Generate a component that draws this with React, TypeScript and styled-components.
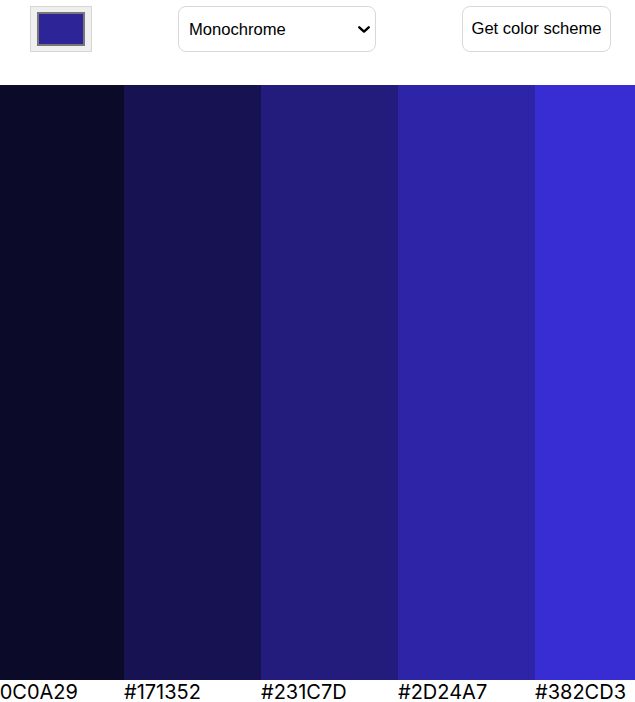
import React, { useState } from "react";
import styled, { createGlobalStyle } from "styled-components";

const GlobalStyle = createGlobalStyle`
  html, body {
    margin: 0;
    padding: 0;
    overflow: hidden;
    background: #fff;
  }
  body {
    font-family: "Liberation Sans", Arial, sans-serif;
  }
`;

const Header = styled.header`
  display: flex;
  align-items: flex-start;
  gap: 86px;
  height: 85px;
  padding: 6px 0 0 30px;
  box-sizing: border-box;
`;

const ColorInput = styled.input`
  width: 62px;
  height: 46px;
  margin: 0;
  padding: 5px 6px;
  box-sizing: border-box;
  background: #efefef;
  border: 1px solid #d6d6d6;
  cursor: pointer;

  &::-webkit-color-swatch-wrapper {
    padding: 0;
  }
  &::-webkit-color-swatch {
    border: 2px solid #777;
  }
`;

const SelectWrap = styled.div`
  position: relative;
  width: 198px;
  height: 46px;
`;

const Select = styled.select`
  appearance: none;
  width: 100%;
  height: 100%;
  padding: 0 28px 0 10px;
  font-family: "Liberation Sans", Arial, sans-serif;
  font-size: 16.6px;
  color: #000;
  background: #fff;
  border: 1px solid #d8d8dc;
  border-radius: 8px;
`;

const Chevron = styled.svg`
  position: absolute;
  right: 6px;
  top: 20px;
  width: 12px;
  height: 7px;
  pointer-events: none;
`;

const Button = styled.button`
  width: 149px;
  height: 46px;
  padding: 0;
  font-family: "Liberation Sans", Arial, sans-serif;
  font-size: 16.6px;
  color: #000;
  background: #fff;
  border: 1px solid #d8d8dc;
  border-radius: 8px;
  cursor: pointer;
`;

const Palette = styled.main`
  display: flex;
  width: 685px;
  margin-left: -13px;
`;

const Column = styled.div`
  display: flex;
  flex-direction: column;
  flex: 0 0 137px;
`;

const Swatch = styled.div<{ $color: string }>`
  height: 595px;
  background: ${(p) => p.$color};
`;

const Label = styled.p`
  margin: 0;
  font-family: Inter, "Noto Sans", sans-serif;
  font-size: 20px;
  line-height: 24px;
  color: #000;
`;

const Colors = ["#0C0A29", "#171352", "#231C7D", "#2D24A7", "#382CD3"];

const Modes = [
  "Monochrome",
  "Monochrome-dark",
  "Monochrome-light",
  "Analogic",
  "Complement",
  "Analogic-complement",
  "Triad",
];

const App = () => {
  const [seed, setSeed] = useState("#2d2497");
  const [mode, setMode] = useState("Monochrome");

  return (
    <>
      <GlobalStyle />
      <Header>
        <ColorInput
          type="color"
          value={seed}
          onChange={(e) => setSeed(e.target.value)}
        />
        <SelectWrap>
          <Select value={mode} onChange={(e) => setMode(e.target.value)}>
            {Modes.map((m) => (
              <option key={m} value={m}>
                {m}
              </option>
            ))}
          </Select>
          <Chevron viewBox="0 0 12 7">
            <path
              d="M1.3 1.3 L6 5.6 L10.7 1.3"
              fill="none"
              stroke="#000"
              strokeWidth="2.4"
              strokeLinecap="round"
              strokeLinejoin="round"
            />
          </Chevron>
        </SelectWrap>
        <Button>Get color scheme</Button>
      </Header>
      <Palette>
        {Colors.map((c) => (
          <Column key={c}>
            <Swatch $color={c} />
            <Label>{c}</Label>
          </Column>
        ))}
      </Palette>
    </>
  );
};

export default App;
